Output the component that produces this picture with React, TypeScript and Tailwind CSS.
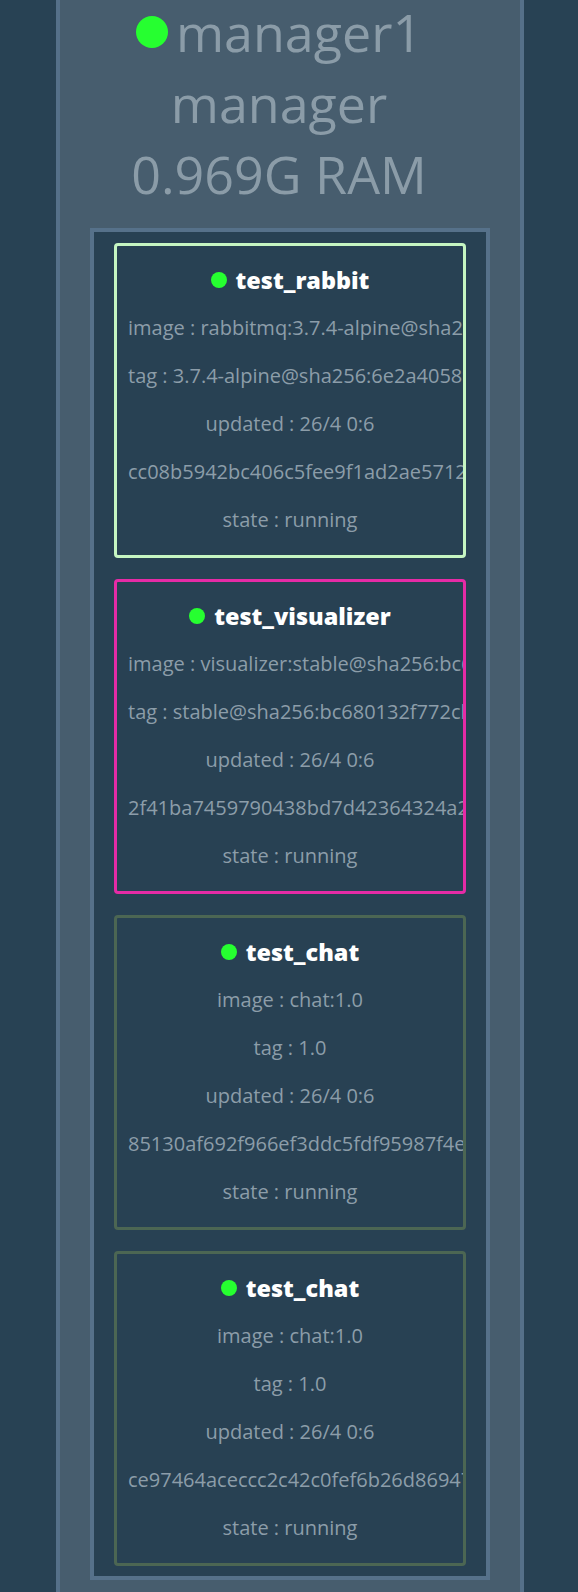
const services = [
  {
    name: 'test_rabbit',
    border: 'border-[#c6f6c2]',
    image: 'rabbitmq:3.7.4-alpine@sha256:6e2a405894e8a1d1fa6f0c5d4e6e5cd1c3b8a3f9',
    tag: '3.7.4-alpine@sha256:6e2a405894e8a1d1fa6f0c5d4e6e5cd1c3b8a3f9',
    updated: '26/4 0:6',
    id: 'cc08b5942bc406c5fee9f1ad2ae5712a9d3e1f7b8c6a5d4e3f2a1b0c9d8e7f6a',
    state: 'running',
  },
  {
    name: 'test_visualizer',
    border: 'border-[#e62ba6]',
    image: 'visualizer:stable@sha256:bc680132f772cb44062795c514570db2f0b6f91063bc3afa2386edaaa0ef0b20',
    tag: 'stable@sha256:bc680132f772cb44062795c514570db2f0b6f91063bc3afa2386edaaa0ef0b20',
    updated: '26/4 0:6',
    id: '2f41ba7459790438bd7d42364324a2b7c1d0e9f8a7b6c5d4e3f2a1b0c9d8e7f6',
    state: 'running',
  },
  {
    name: 'test_chat',
    border: 'border-[#4c6653]',
    image: 'chat:1.0',
    tag: '1.0',
    updated: '26/4 0:6',
    id: '85130af692f966ef3ddc5fdf95987f4e1a2b3c4d5e6f7a8b9c0d1e2f3a4b5c6d',
    state: 'running',
  },
  {
    name: 'test_chat',
    border: 'border-[#4c6653]',
    image: 'chat:1.0',
    tag: '1.0',
    updated: '26/4 0:6',
    id: 'ce97464aceccc2c42c0fef6b26d869478f1e2d3c4b5a69788796a5b4c3d2e1f0',
    state: 'running',
  },
];

function ServiceCard({ s }: { s: (typeof services)[number] }) {
  return (
    <div
      className={`border-[3px] ${s.border} rounded-[4px] bg-[#284153] overflow-hidden px-[11px] pt-[10px] pb-[11px] text-center whitespace-nowrap`}
    >
      <div className="h-[48px] flex items-center justify-center">
        <span className="w-[16px] h-[16px] rounded-full bg-[#26ff30] mr-[9px]" />
        <h3 className="text-[23.4px] font-extrabold text-white leading-none">{s.name}</h3>
      </div>
      <p className="leading-[48px]">image : {s.image}</p>
      <p className="leading-[48px]">tag : {s.tag}</p>
      <p className="leading-[48px]">updated : {s.updated}</p>
      <p className="leading-[48px]">{s.id}</p>
      <p className="leading-[48px]">state : {s.state}</p>
    </div>
  );
}

export default function App() {
  return (
    <div
      className="min-h-screen bg-[#284254] overflow-hidden"
      style={{ fontFamily: '"Open Sans", "Noto Sans", sans-serif' }}
    >
      <div className="ml-[56px] w-[468px] min-h-[1600px] bg-[#475d6e] border-x-4 border-[#557089] px-[30px] pb-[20px]">
        <div className="-mt-[3px] pr-[22px] text-center text-[52px] text-[#8b9ca8] leading-[70.8px] mb-[19px]">
          <div className="flex items-center justify-center">
            <span className="w-[32px] h-[32px] rounded-full bg-[#26ff30] mr-[8px]" />
            <span>manager1</span>
          </div>
          <div>manager</div>
          <div>0.969G RAM</div>
        </div>
        <div className="border-4 border-[#56718a] bg-[#284153] px-[20px] pt-[11px] pb-[10px] flex flex-col gap-[21px] text-[20px] text-[#8c9da9]">
          {services.map((s, i) => (
            <ServiceCard key={i} s={s} />
          ))}
        </div>
      </div>
    </div>
  );
}
